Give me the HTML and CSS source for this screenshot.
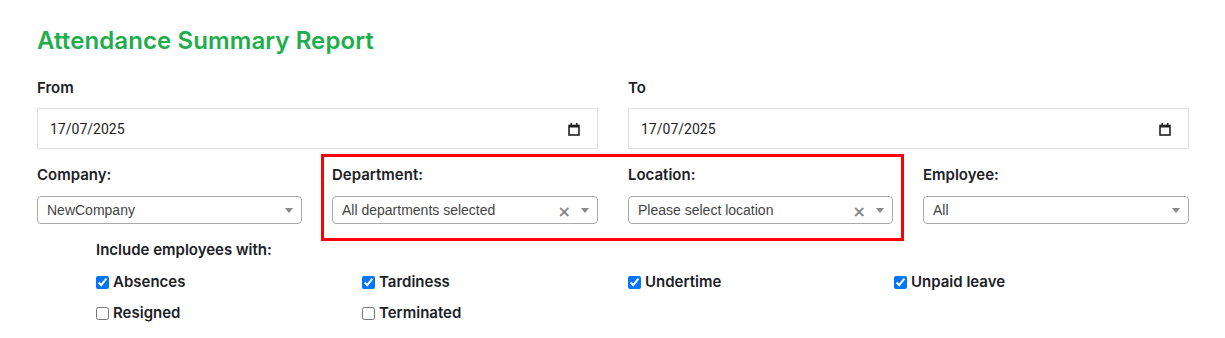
FILE: index.html
```html
<!DOCTYPE html>
<html lang="en">
<head>
    <meta charset="UTF-8">
    <meta name="viewport" content="width=device-width, initial-scale=1.0">
    <title>Attendance Summary Report</title>
    <link rel="stylesheet" href="styles.css">
</head>
<body>
    <div class="page">
        <h1 class="title">Attendance Summary Report</h1>

        <div class="row two">
            <div class="field">
                <label class="label">From</label>
                <div class="date-input">
                    <span>17/07/2025</span>
                    <svg class="cal" width="12" height="14" viewBox="0 0 12 14">
                        <rect x="1" y="3.5" width="10" height="9.5" fill="none" stroke="#222" stroke-width="1.6"/>
                        <rect x="1" y="3" width="10" height="2.5" fill="#222"/>
                        <rect x="2.5" y="1" width="1.6" height="2.5" fill="#222"/>
                        <rect x="7.9" y="1" width="1.6" height="2.5" fill="#222"/>
                    </svg>
                </div>
            </div>
            <div class="field">
                <label class="label">To</label>
                <div class="date-input">
                    <span>17/07/2025</span>
                    <svg class="cal" width="12" height="14" viewBox="0 0 12 14">
                        <rect x="1" y="3.5" width="10" height="9.5" fill="none" stroke="#222" stroke-width="1.6"/>
                        <rect x="1" y="3" width="10" height="2.5" fill="#222"/>
                        <rect x="2.5" y="1" width="1.6" height="2.5" fill="#222"/>
                        <rect x="7.9" y="1" width="1.6" height="2.5" fill="#222"/>
                    </svg>
                </div>
            </div>
        </div>

        <div class="row four">
            <div class="field">
                <label class="label">Company:</label>
                <div class="select">
                    <span class="select-text">NewCompany</span>
                    <span class="arrow"></span>
                </div>
            </div>
            <div class="highlight">
                <div class="field">
                    <label class="label">Department:</label>
                    <div class="select">
                        <span class="select-text">All departments selected</span>
                        <span class="clear">×</span>
                        <span class="arrow"></span>
                    </div>
                </div>
                <div class="field">
                    <label class="label">Location:</label>
                    <div class="select">
                        <span class="select-text">Please select location</span>
                        <span class="clear">×</span>
                        <span class="arrow"></span>
                    </div>
                </div>
            </div>
            <div class="field">
                <label class="label">Employee:</label>
                <div class="select">
                    <span class="select-text">All</span>
                    <span class="arrow"></span>
                </div>
            </div>
        </div>

        <div class="include">
            <div class="label">Include employees with:</div>
            <div class="checks">
                <label class="check"><input type="checkbox" checked> Absences</label>
                <label class="check"><input type="checkbox" checked> Tardiness</label>
                <label class="check"><input type="checkbox" checked> Undertime</label>
                <label class="check"><input type="checkbox" checked> Unpaid leave</label>
                <label class="check"><input type="checkbox"> Resigned</label>
                <label class="check"><input type="checkbox"> Terminated</label>
            </div>
        </div>
    </div>
</body>
</html>
```

FILE: styles.css
```css
body {
    margin: 0;
    background: #fff;
    font-family: Inter, 'Noto Sans', sans-serif;
    color: #1c2126;
}
.page {
    padding: 26px 36px 0 37px;
}
.title {
    margin: 0;
    font-size: 24px;
    line-height: 30px;
    font-weight: 600;
    color: #20ad4b;
    letter-spacing: 0.1px;
}
.label {
    display: block;
    font-size: 15px;
    line-height: 20px;
    font-weight: 600;
    color: #1c2126;
}
.row {
    display: grid;
    column-gap: 30px;
}
.row.two {
    grid-template-columns: 561px 561px;
    margin-top: 22px;
}
.row.two .label {
    margin-bottom: 10px;
}
.row.four {
    grid-template-columns: 265px 266px 265px 266px;
    margin-top: 16px;
}
.row.four .label {
    margin-bottom: 11px;
}
.date-input {
    height: 41px;
    box-sizing: border-box;
    border: 1px solid #e2e2e2;
    display: flex;
    align-items: center;
    justify-content: space-between;
    padding: 0 12px 0 12px;
    font-family: Roboto, 'Liberation Sans', sans-serif;
    font-size: 14px;
    color: #1e1e1e;
}
.cal {
    display: block;
    margin-right: 5px;
}
.highlight {
    grid-column: 2 / 4;
    display: grid;
    grid-template-columns: 266px 265px;
    column-gap: 30px;
    position: relative;
}
.highlight::after {
    content: '';
    position: absolute;
    top: -11px;
    left: -11px;
    right: -11px;
    bottom: -17px;
    border: 3px solid #ff0000;
    pointer-events: none;
}
.select {
    height: 28px;
    box-sizing: border-box;
    border: 1px solid #aaa;
    border-radius: 4px;
    display: flex;
    align-items: center;
    padding: 0 8px 0 9px;
    font-family: 'Liberation Sans', Arial, sans-serif;
    font-size: 14px;
    color: #444;
}
.select-text {
    flex: 1;
    white-space: nowrap;
    overflow: hidden;
}
.clear {
    font-family: 'DejaVu Sans', sans-serif;
    font-weight: bold;
    font-size: 16px;
    color: #888;
    margin-right: 10px;
    margin-top: 2px;
}
.arrow {
    width: 0;
    height: 0;
    border-top: 5px solid #888;
    border-left: 4px solid transparent;
    border-right: 4px solid transparent;
    margin-top: 1px;
}
.include {
    margin-left: 59px;
    margin-top: 16px;
}
.checks {
    display: grid;
    grid-template-columns: 266px 266px 266px 266px;
    margin-top: 12px;
    row-gap: 11px;
}
.check {
    display: flex;
    align-items: center;
    font-size: 15px;
    line-height: 20px;
    font-weight: 600;
    color: #1c2126;
}
.check input {
    width: 13px;
    height: 13px;
    margin: 0 4px 0 0;
}
```
